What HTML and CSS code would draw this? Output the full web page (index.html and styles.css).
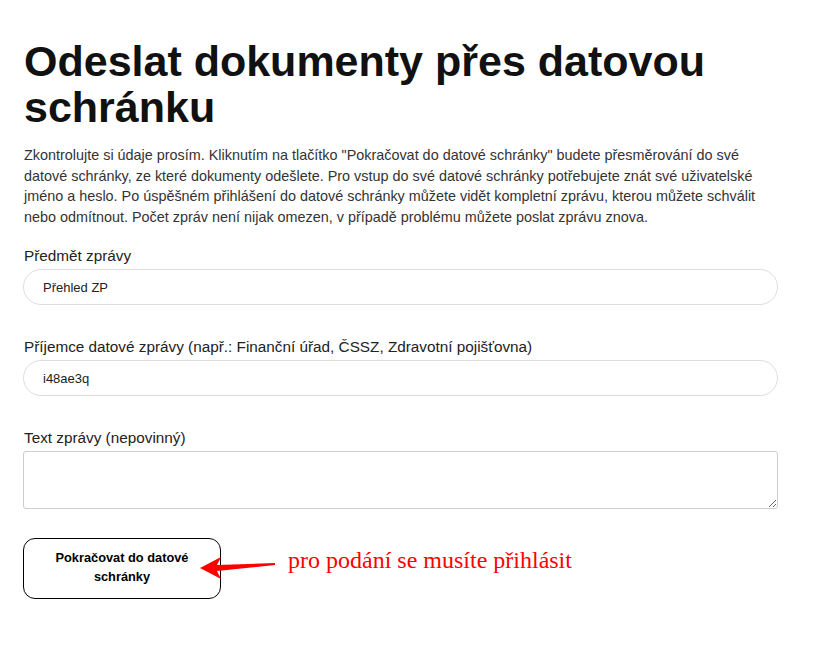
FILE: index.html
```html
<!DOCTYPE html>
<html lang="cs">

<head>
    <meta charset="UTF-8">
    <meta name="viewport" content="width=device-width, initial-scale=1.0">
    <title>Odeslat dokumenty přes datovou schránku</title>
    <link rel="stylesheet" href="styles.css">
</head>

<body>
    <!-- hlavní obsah stránky -->
    <div class="page">
        <h1 class="page-title">Odeslat dokumenty přes datovou schránku</h1>

        <p class="intro">Zkontrolujte si údaje prosím. Kliknutím na tlačítko "Pokračovat do datové schránky" budete přesměrování do své datové schránky, ze které dokumenty odešlete. Pro vstup do své datové schránky potřebujete znát své uživatelské jméno a heslo. Po úspěšném přihlášení do datové schránky můžete vidět kompletní zprávu, kterou můžete schválit nebo odmítnout. Počet zpráv není nijak omezen, v případě problému můžete poslat zprávu znova.</p>

        <form class="ds-form">
            <div class="field">
                <label class="field-label" for="subject">Předmět zprávy</label>
                <input class="field-input" id="subject" type="text" value="Přehled ZP">
            </div>

            <div class="field">
                <label class="field-label" for="recipient">Příjemce datové zprávy (např.: Finanční úřad, ČSSZ, Zdravotní pojišťovna)</label>
                <input class="field-input" id="recipient" type="text" value="i48ae3q">
            </div>

            <div class="field field-last">
                <label class="field-label" for="message">Text zprávy (nepovinný)</label>
                <textarea class="field-textarea" id="message"></textarea>
            </div>

            <!-- tlačítko a poznámka se šipkou -->
            <div class="submit-row">
                <button class="submit-btn" type="button">Pokračovat do datové schránky</button>
                <div class="login-note">
                    <svg class="note-arrow" width="76" height="24" viewBox="0 0 76 24">
                        <polygon points="0,11 21,0 17,8 75,6 75,8 17,14 21,22" fill="#ff0000" />
                    </svg>
                    <span class="note-text">pro podání se musíte přihlásit</span>
                </div>
            </div>
        </form>
    </div>
</body>

</html>
```

FILE: styles.css
```css
/* základ stránky */
body {
    margin: 0;
    background-color: #fff;
    font-family: "Liberation Sans", Arial, sans-serif;
    color: #222;
}

.page {
    width: 755px;
    padding: 38px 0 40px 23px;
}

/* nadpis */
.page-title {
    margin: 0 0 15px 1px;
    font-size: 43px;
    line-height: 46px;
    font-weight: bold;
    color: #111;
}

/* úvodní text */
.intro {
    margin: 0 0 19px 1px;
    font-size: 14.4px;
    line-height: 20.6px;
    color: #333;
}

/* formulář */
.field {
    margin-bottom: 32px;
}

.field-last {
    margin-bottom: 29px;
}

.field-label {
    display: block;
    margin: 0 0 3px 1px;
    font-size: 15.3px;
    line-height: 20px;
    color: #222;
}

.field-input {
    display: block;
    box-sizing: border-box;
    width: 100%;
    height: 36px;
    padding: 0 19px;
    border: 1px solid #ddd;
    border-radius: 18px;
    font-family: "Liberation Sans", Arial, sans-serif;
    font-size: 13px;
    color: #222;
    background-color: #fff;
}

.field-textarea {
    display: block;
    box-sizing: border-box;
    width: 100%;
    height: 58px;
    border: 1px solid #ccc;
    border-radius: 3px;
    font-family: "Liberation Sans", Arial, sans-serif;
    font-size: 13px;
}

/* tlačítko */
.submit-row {
    display: flex;
    align-items: center;
}

.submit-btn {
    width: 198px;
    height: 61px;
    padding: 0 28px 3px;
    border: 1px solid #000;
    border-radius: 12px;
    background-color: #fff;
    font-family: "Liberation Sans", Arial, sans-serif;
    font-size: 12.8px;
    line-height: 19px;
    font-weight: bold;
    color: #000;
    cursor: pointer;
}

.login-note {
    display: flex;
    align-items: center;
    margin-left: -21px;
}

.note-arrow {
    display: block;
}

.note-text {
    margin-left: 12px;
    padding-bottom: 16px;
    font-family: "Liberation Serif", "Times New Roman", serif;
    font-size: 24px;
    color: #ff0000;
}
```
